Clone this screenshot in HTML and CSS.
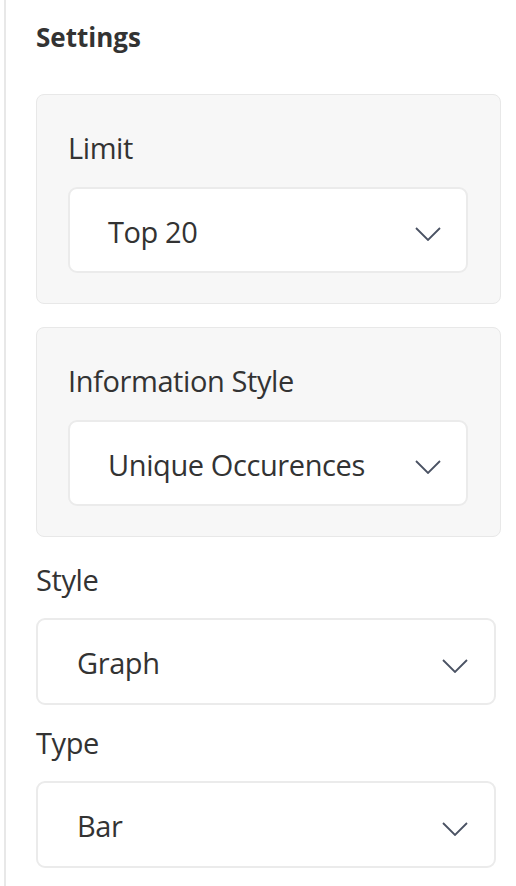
FILE: index.html
```html
<!DOCTYPE html>
<html>
<head>
<meta charset="utf-8">
<link rel="stylesheet" href="styles.css">
</head>
<body>
<div class="panel">
  <h1 class="title">Settings</h1>

  <div class="card">
    <div class="label">Limit</div>
    <div class="select card-select">
      <span class="value">Top 20</span>
      <svg class="chev" viewBox="0 0 26 14" width="26" height="14"><path d="M1 1 L13 13 L25 1" fill="none" stroke="currentColor" stroke-width="1.8"/></svg>
    </div>
  </div>

  <div class="card">
    <div class="label">Information Style</div>
    <div class="select card-select">
      <span class="value">Unique Occurences</span>
      <svg class="chev" viewBox="0 0 26 14" width="26" height="14"><path d="M1 1 L13 13 L25 1" fill="none" stroke="currentColor" stroke-width="1.8"/></svg>
    </div>
  </div>

  <div class="field">
    <div class="label">Style</div>
    <div class="select plain-select">
      <span class="value">Graph</span>
      <svg class="chev" viewBox="0 0 26 14" width="26" height="14"><path d="M1 1 L13 13 L25 1" fill="none" stroke="currentColor" stroke-width="1.8"/></svg>
    </div>
  </div>

  <div class="field">
    <div class="label">Type</div>
    <div class="select plain-select">
      <span class="value">Bar</span>
      <svg class="chev" viewBox="0 0 26 14" width="26" height="14"><path d="M1 1 L13 13 L25 1" fill="none" stroke="currentColor" stroke-width="1.8"/></svg>
    </div>
  </div>
</div>
</body>
</html>
```

FILE: styles.css
```css
html, body {
  margin: 0;
  padding: 0;
  background: #ffffff;
}

body {
  font-family: "Open Sans", "Noto Sans", sans-serif;
  color: #333333;
}

.panel {
  margin-left: 4px;
  border-left: 2px solid #e8e8e8;
  padding: 19px 15px 0 30px;
  min-height: 886px;
  box-sizing: border-box;
  width: 512px;
}

.title {
  margin: 0 0 39px 0;
  font-size: 26px;
  line-height: 36px;
  font-weight: 700;
  color: #333333;
}

.card {
  background: #f7f7f7;
  border: 1px solid #e8e8e8;
  border-radius: 8px;
  padding: 33px 32px 30px 31px;
  margin-bottom: 23px;
  width: 465px;
  box-sizing: border-box;
  display: flex;
  flex-direction: column;
  gap: 19px;
}

.label {
  font-size: 29px;
  letter-spacing: -0.4px;
  line-height: 40px;
  color: #333333;
}

.select {
  background: #ffffff;
  border: 2px solid #ebebeb;
  border-radius: 9px;
  box-sizing: border-box;
  display: flex;
  align-items: center;
  justify-content: space-between;
  padding-top: 3px;
}

.card-select {
  height: 86px;
  padding-left: 38px;
  padding-right: 25px;
}

.plain-select {
  height: 87px;
  width: 460px;
  padding-left: 39px;
  padding-right: 26px;
}

.field {
  display: flex;
  flex-direction: column;
  gap: 18px;
  margin-bottom: 18px;
}

.value {
  font-size: 29px;
  letter-spacing: -0.4px;
  line-height: 40px;
  color: #333333;
}

.chev {
  color: #4a5263;
  display: block;
  margin-top: 5px;
}
```
